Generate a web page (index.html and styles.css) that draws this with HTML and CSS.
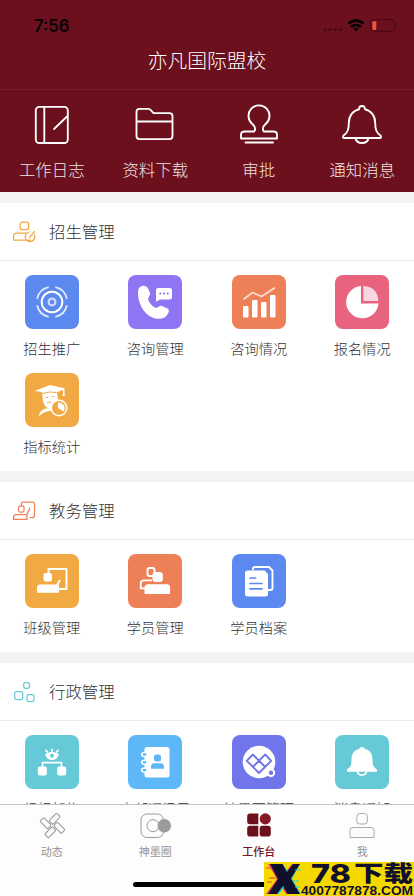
FILE: index.html
```html
<!DOCTYPE html>
<html lang="zh-CN">
<head>
<meta charset="utf-8">
<meta name="viewport" content="width=device-width, initial-scale=1">
<title>亦凡国际盟校</title>
<link rel="stylesheet" href="styles.css">
</head>
<body>
<div class="app">
<header class="top">
  <div class="status">
    <span class="time">7:56</span>
    <svg class="signals" width="76" height="16" viewBox="0 0 76 16">
      <g fill="#450b15"><circle cx="2" cy="11.500" r="1.600"/><circle cx="7" cy="11.500" r="1.600"/><circle cx="12.300" cy="11.500" r="1.600"/><circle cx="17.500" cy="11.500" r="1.600"/></g>
      <g fill="none" stroke="#080205" stroke-width="2.700"><path d="M25.300 5.500a11.500 11.500 0 0 1 15.400 0"/><path d="M28.200 8.900a7 7 0 0 1 9.600 0"/></g>
      <path d="M30.400 10.900a4 4 0 0 1 5.200 0L33 13.400z" fill="#080205"/>
      <rect x="47.600" y="1.700" width="24" height="11.600" rx="3" fill="none" stroke="#470812"/><path d="M73 5.500q2 2 0 4z" fill="#470812"/>
      <rect x="49.300" y="3.200" width="4" height="8.700" rx="1" fill="#ef533f"/>
    </svg>
  </div>
  <h1>亦凡国际盟校</h1>
</header>
<nav class="quick">
  <a><svg width="42" height="42" viewBox="0 0 42 42"><rect x="4.800" y="2.800" width="32" height="36.200" rx="3.500"/><path d="M13.300 2.800v36M36 12.500L23 25"/></svg><span>工作日志</span></a>
  <a><svg width="42" height="42" viewBox="0 0 42 42"><path d="M5.500 4.900h8.800q1.500 0 2.500 1.200l2.700 3h16q3 0 3 3v20q0 3-3 3h-30q-3 0-3-3V7.900q0-3 3-3zM2.500 17.500h36"/></svg><span>资料下载</span></a>
  <a><svg width="42" height="42" viewBox="0 0 42 42"><path d="M16.200 27.500c2-3 .5-5.500-1.800-7.500a10.500 10.500 0 1 1 13.200 0c-2.300 2-3.800 4.500-1.800 7.500h9.500q3.700 0 3.700 3v4H3v-4q0-3 3.700-3zM7.500 38.500h27.500"/></svg><span>审批</span></a>
  <a><svg width="42" height="42" viewBox="0 0 42 42"><path d="M18 5.400q0-3.400 3-3.400t3 3.400c6 1 10.200 6.500 10.200 13.600 0 7 1.300 9.500 5.300 12.500q1.500 2.500-1 2.500h-35q-2.500 0-1-2.500c4-3 5.300-5.500 5.300-12.500C7.800 11.900 12 6.400 18 5.400zM14.500 34c1 6.600 12 6.600 13 0"/></svg><span>通知消息</span></a>
</nav>
<main>
<section>
  <h2><svg class="c-gold" width="24" height="24" viewBox="0 0 24 24"><rect x="8.200" y="2" width="8.500" height="7.500" rx="2"/><path d="M14 13H5q-3.500 0-3.500 3.500V20h17M22.500 15a4.800 4.800 0 1 1-5-3M17.500 17.500l5-6"/></svg><span>招生管理</span></h2>
  <div class="grid">
    <div class="item"><svg class="tile blue" viewBox="0 0 54 54"><g fill="none" stroke="#fff"><circle cx="27" cy="27" r="10.300" stroke-width="2"/><circle cx="27" cy="27" r="3.400" stroke-width="2.200" opacity=".7"/><path d="M30.300 12.100A15.300 15.300 0 0 1 41.900 23.700M41.900 30.300A15.300 15.300 0 0 1 30.300 41.900M23.700 41.900A15.300 15.300 0 0 1 12.100 30.300M12.100 23.700A15.300 15.300 0 0 1 23.700 12.100" stroke-width="1.900" opacity=".8"/></g></svg><span>招生推广</span></div>
    <div class="item"><svg class="tile purple" viewBox="0 0 54 54"><path fill="#fff" d="M12 12c3-2 6.500-1.500 8 1.500l2 4.500c1 2.500-3 4.500-1.500 7.500 1.200 3 3.500 5.500 6.500 7 3 1.500 4-2.500 7-1.500l5.500 2.500q2.500 1.500.5 5c-2 5-8 6.500-14.500 4.500C17 40 11 31 10 20q-.5-6 2-8zM30 13h12q2 0 2 2v7.500q0 2-2 2H32l-4 2.200V15q0-2 2-2z"/><g fill="#8f75f4"><circle cx="32.300" cy="18.500" r="1.100"/><circle cx="36" cy="18.500" r="1.100"/><circle cx="39.700" cy="18.500" r="1.100"/></g></svg><span>咨询管理</span></div>
    <div class="item"><svg class="tile orange" viewBox="0 0 54 54"><g fill="#fff"><rect x="11" y="31" width="5.500" height="11.500" rx="1"/><rect x="20" y="25" width="5.500" height="17.500" rx="1"/><rect x="29" y="27" width="5.500" height="15.500" rx="1"/><rect x="38" y="20" width="5.500" height="22.500" rx="1"/></g><path d="M12 24l8.500-6.500 9 4 13-8.500" fill="none" stroke="#fbded3" stroke-width="1.600" stroke-linecap="round"/></svg><span>咨询情况</span></div>
    <div class="item"><svg class="tile pink" viewBox="0 0 54 54"><path fill="#fff" d="M26 11a16.200 16.200 0 1 0 17.500 17.500H26z"/><path fill="#f8d5e0" d="M28.300 11Q42.800 12 43.300 26h-15z"/></svg><span>报名情况</span></div>
    <div class="item"><svg class="tile gold" viewBox="0 0 54 54"><path fill="#fff" d="M9.500 18L25 12l14.500 3.200V22h-1.500v-5L32 19l1 8-6 3-1 6c-5-.5-9-5-8.500-14.500L17 19zM14 41.500c2-5 6-6 12-7l1.500 3.500c-7 0-10 2-13 5z"/><path d="M17.500 20.500q7-2.500 14-1M21 24.500h2M27 23.500h2M22 29.500q2 1 4-1" stroke="#f1aa43" fill="none"/><circle cx="34" cy="35" r="7.700" fill="#f1aa43" stroke="#fff" stroke-width="1.500"/><path fill="#fff" d="M33 29.500a5.800 5.800 0 0 1 5.500 9L33 35z"/><circle cx="38.700" cy="22" r="1.200" fill="#fff"/></svg><span>指标统计</span></div>
  </div>
</section>
<section>
  <h2><svg class="c-orange" width="24" height="24" viewBox="0 0 24 24"><path d="M9.300 6.500V5q0-2 2-2H20.500q2 0 2 2v11.500q0 2-2 2H18M17.700 9.500l-2.700 6"/><rect x="6.500" y="7" width="5.500" height="6" rx="1.500"/><path d="M4.500 15.500H13q2 0 2 2v2.800H1.500V18.500q0-3 3-3z"/></svg><span>教务管理</span></h2>
  <div class="grid">
    <div class="item"><svg class="tile gold" viewBox="0 0 54 54"><path d="M23.500 20v-5h18v20H33M35 26l-4.500 8" fill="none" stroke="#fff" stroke-width="1.900"/><rect x="18.500" y="19" width="8.500" height="8.500" rx="2" fill="#fff"/><path fill="#fff" d="M15 30.500h19v8.300H12V34q0-3.500 3-3.500z"/></svg><span>班级管理</span></div>
    <div class="item"><svg class="tile orange" viewBox="0 0 54 54"><rect x="19.500" y="14" width="7" height="8" rx="2" fill="none" stroke="#fff" stroke-width="1.900"/><path d="M24 26.400H16q-3.200 0-3.200 3v5H18" fill="none" stroke="#fff" stroke-width="1.900"/><rect x="24.500" y="18" width="10.300" height="10" rx="3" fill="#fff"/><path d="M20 30.300h19q3 0 3 3v6.700H16.500v-6q0-3.700 3.500-3.700z" fill="#fff"/></svg><span>学员管理</span></div>
    <div class="item"><svg class="tile blue" viewBox="0 0 54 54"><path d="M21 16v-1q0-2 2-2h14l3.500 3.500V34q0 2-2 2H35" fill="none" stroke="#fff" stroke-width="1.900"/><path d="M15.500 16.500h17l3.500 3.500v20q0 2.500-2.500 2.500h-18Q13 42.500 13 40V19q0-2.500 2.500-2.500z" fill="#fff"/><path d="M18 24h5.500M18 29.500h12M18 34.800h12" stroke="#5c89ef" stroke-width="1.700" stroke-linecap="round"/></svg><span>学员档案</span></div>
  </div>
</section>
<section>
  <h2><svg class="c-teal" width="24" height="24" viewBox="0 0 24 24"><rect x="11.700" y="2.500" width="5.800" height="5.800" rx="1.700"/><rect x="2.700" y="11.500" width="8" height="8" rx="1.900"/><rect x="15" y="14.500" width="7" height="7" rx="1.700"/></svg><span>行政管理</span></h2>
  <div class="grid">
    <div class="item"><svg class="tile teal" viewBox="0 0 54 54"><path d="M20 19.500q7-5.500 14 0-2 5.500-7 5.500t-7-5.500z" fill="#fff"/><circle cx="27" cy="20.700" r="2" fill="#65c9d7"/><path d="M27 17v-3.300M22.800 17.500L20.500 14.800M31.200 17.500l2.300-2.700M17.500 32v-4.300h19V32" fill="none" stroke="#fff" stroke-width="1.700"/><rect x="12.800" y="31.500" width="9" height="9" rx="2" fill="#fff"/><rect x="32.200" y="31.500" width="9" height="9" rx="2" fill="#fff"/></svg><span>组织架构</span></div>
    <div class="item"><svg class="tile sky" viewBox="0 0 54 54"><rect x="16.500" y="12" width="25" height="30.500" rx="2.500" fill="#fff"/><g fill="#5eb8f7" stroke="#fff" stroke-width="1.500"><ellipse cx="16.500" cy="19.500" rx="2.800" ry="2"/><ellipse cx="16.500" cy="27.300" rx="2.800" ry="2"/><ellipse cx="16.500" cy="35" rx="2.800" ry="2"/></g><rect x="26" y="19.500" width="7" height="7" rx="2.500" fill="#5eb8f7"/><path d="M23 33.800v-2q0-3.500 3.500-3.500h6q3.500 0 3.500 3.500v2z" fill="#5eb8f7"/></svg><span>内部通讯录</span></div>
    <div class="item"><svg class="tile violet" viewBox="0 0 54 54"><circle cx="27" cy="27" r="16.300" fill="#fff"/><g fill="none" stroke="#7175ec" stroke-width="1.900" stroke-linejoin="round"><path d="M20.800 19.500l-6 6.300L27 38l12.200-12.200-6-6.300L20.800 32M20.800 19.500L33.200 32"/></g><circle cx="39" cy="37.700" r="3.200" fill="#7175ec" stroke="#fff" stroke-width="2"/></svg><span>神墨圈管理</span></div>
    <div class="item"><svg class="tile teal" viewBox="0 0 54 54"><path d="M24 14q.5-2 3-2t3 2c5 1 7.500 5 7.500 10.500 0 6 1 7.500 4.500 10v2.300H12v-2.300c3.500-2.500 4.500-4 4.500-10C16.500 19 19 15 24 14z" fill="#fff"/><path d="M22.500 36.500c.5 4.700 8.500 4.700 9 0" fill="none" stroke="#fff" stroke-width="1.700"/></svg><span>消息通知</span></div>
  </div>
</section>
</main>
<footer class="tabs">
  <a><svg width="30" height="28" viewBox="0 0 30 28"><g fill="none" stroke="#999" stroke-width="1.050"><rect x="-5.500" y="-2.700" width="11" height="5.400" rx="1.300" transform="translate(17.700 6.800) rotate(-45)"/><rect x="-5.500" y="-2.700" width="11" height="5.400" rx="1.300" transform="translate(8.700 11.300) rotate(45)"/><rect x="-5.500" y="-2.700" width="11" height="5.400" rx="1.300" transform="translate(13.300 20.300) rotate(-45)"/><rect x="-5.500" y="-2.700" width="11" height="5.400" rx="1.300" transform="translate(22.300 15.800) rotate(45)"/></g></svg><span>动态</span></a>
  <a><svg width="34" height="28" viewBox="0 0 34 28"><rect x="3" y="2" width="22.500" height="23.500" rx="6" fill="none" stroke="#999"/><circle cx="15" cy="13.700" r="6" fill="none" stroke="#999"/><circle cx="26.300" cy="13.700" r="6.800" fill="#9b9b9b"/></svg><span>神墨圈</span></a>
  <a class="on"><svg width="30" height="28" viewBox="0 0 30 28"><g fill="#6b101c"><path d="M6 1.500h8.300v10.800H6q-2.800 0-2.800-2.800V4.300q0-2.800 2.800-2.800zM6 13.800h8.300v10.700H6q-2.800 0-2.800-2.800v-5.100q0-2.800 2.800-2.800zM18.500 13.800H24q2.800 0 2.800 2.800v5.100q0 2.800-2.800 2.800h-5.500q-2.800 0-2.800-2.800v-5.100q0-2.800 2.800-2.800z"/></g><circle cx="21.300" cy="6.900" r="5.600" fill="#861923"/></svg><span>工作台</span></a>
  <a><svg width="30" height="28" viewBox="0 0 30 28"><g fill="none" stroke="#aaa"><rect x="9.800" y="1.500" width="10.600" height="10.500" rx="3"/><path d="M6 15.500h18q3 0 3 3v7H3v-7q0-3 3-3z"/></g></svg><span>我</span></a>
</footer>
<div class="home-bar"></div>
<svg class="mark" viewBox="0 0 150 34">
  <rect width="150" height="34" fill="#f5d800"/>
  <path d="M4 2h12l5 9 7-9h7L25 17l10 15H22l-5-8-6 8H2l11-15z" fill="#e83a6b"/>
  <path d="M8 2h11l5 8 6-8h6L28 17l9 15H26l-5-8-6 8H6l11-15z" fill="#1bd5d9"/>
  <path d="M6 2h12.500l4.500 8 6-8h7L27 16.500 36 32H23.500L19 24l-6 8H4l10-15z" fill="#10102c"/>
  <path d="M2 6h6M5 16h8M3 20h5" stroke="#e83a6b"/><path d="M31 8h6M29 19h6M31 25h5" stroke="#1bd5d9"/>
  <text class="mark-num" x="47" y="20.500" textLength="40" lengthAdjust="spacingAndGlyphs">78</text>
  <text class="mark-cn" x="90" y="18.800" textLength="59" lengthAdjust="spacingAndGlyphs">下载</text>
  <text class="mark-url" x="37" y="33" textLength="112" lengthAdjust="spacingAndGlyphs">4007787878.COM</text>
</svg>
</div>
</body>
</html>
```
FILE: styles.css
```css
* { box-sizing: border-box; }
body { margin: 0; font-family: "Noto Sans CJK SC", sans-serif; font-weight: 300; color: #333; background: #fff; }
svg { display: block; flex: none; }
h1, h2 { margin: 0; font-weight: 300; }
.app { position: relative; display: flex; flex-direction: column; width: 414px; height: 896px; overflow: hidden; background: #fff; }
.top { flex: none; height: 90px; background: #6b101c; border-bottom: 1px solid #7b1e2a; }
.status { display: flex; justify-content: space-between; align-items: center; height: 36px; padding: 15px 15px 0 34px; }
.time { font: 600 16.7px/20px Inter, sans-serif; color: #080205; }
h1 { margin-top: 9px; text-align: center; font-size: 19.8px; line-height: 30px; color: #fff; }
.quick { flex: none; display: grid; grid-template-columns: repeat(4, 1fr); height: 102px; padding-top: 14px; background: #6b101c; }
.quick a { display: flex; flex-direction: column; align-items: center; gap: 11px; font-size: 16.4px; line-height: 24px; color: #f0e2e4; }
.quick svg { fill: none; stroke: #fff; stroke-width: 1.850; stroke-linejoin: round; stroke-linecap: round; }
main { flex: 1; min-height: 0; overflow: hidden; display: flex; flex-direction: column; gap: 11px; padding-top: 11px; background: #f3f3f3; }
section { flex: none; background: #fff; }
h2 { display: flex; align-items: center; gap: 13px; height: 58px; padding-left: 12px; font-size: 16.4px; border-bottom: 1px solid #ebebeb; }
h2 span { padding-bottom: 2px; }
h2 svg { fill: none; stroke-width: 1.250; stroke-linecap: round; stroke-linejoin: round; }
.c-gold { stroke: #f1aa43; }
.c-orange { stroke: #ee8058; }
.c-teal { stroke: #65c9d7; }
.grid { display: grid; grid-template-columns: repeat(4, 1fr); padding-top: 14px; }
.item { display: flex; flex-direction: column; align-items: center; gap: 8px; height: 98px; font-size: 14.2px; line-height: 22px; white-space: nowrap; }
.tile { width: 54px; height: 54px; border-radius: 8px; }
.blue { background: #5c89ef; }
.purple { background: #8f75f4; }
.orange { background: #ed8056; }
.pink { background: #e8637e; }
.gold { background: #f1aa43; }
.teal { background: #65c9d7; }
.sky { background: #5eb8f7; }
.violet { background: #7175ec; }
.tabs { flex: none; display: grid; grid-template-columns: repeat(4, 1fr); height: 92px; padding-top: 7px; border-top: 1px solid #c4c4c4; background: #fdfdfd; }
.tabs a { display: flex; flex-direction: column; align-items: center; gap: 3px; font-size: 11px; line-height: 16px; font-weight: 400; color: #979292; }
.tabs .on { font-weight: 500; color: #741522; }
.home-bar { position: absolute; left: 133px; bottom: 9px; width: 148px; height: 5px; border-radius: 3px; background: #000; }
.mark { position: absolute; right: 0; bottom: 0; width: 150px; height: 34px; }
.mark text { fill: #10102c; }
.mark-num { font: 800 26px Inter, sans-serif; }
.mark-cn { font: 900 22px "Noto Sans CJK SC", sans-serif; }
.mark-url { font: 700 13px "Liberation Sans", sans-serif; }
```
